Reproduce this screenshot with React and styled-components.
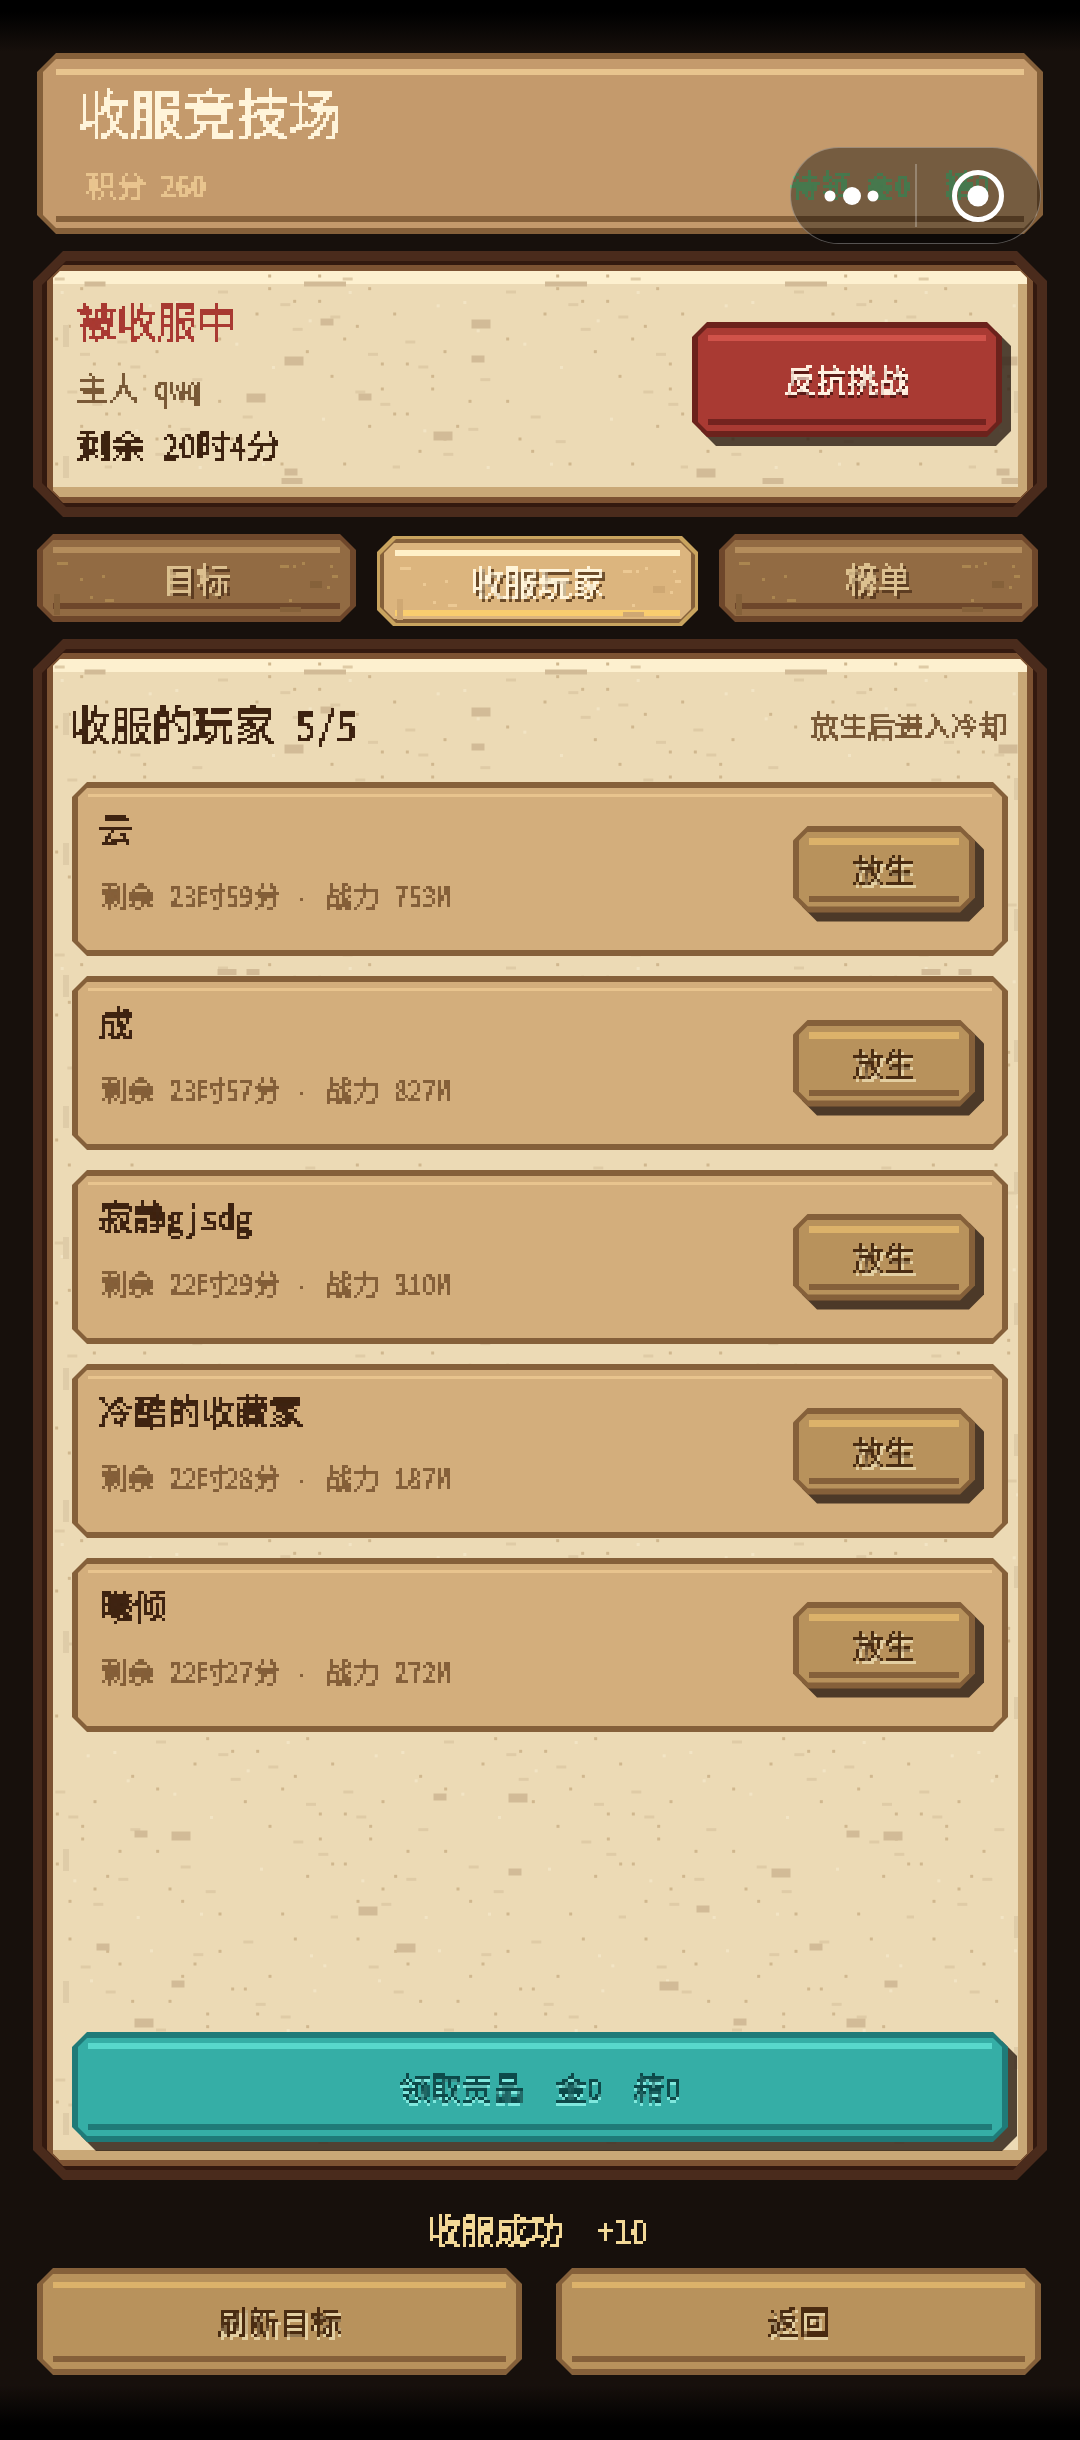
import React from 'react';
import styled, { createGlobalStyle, css } from 'styled-components';

const GlobalStyle = createGlobalStyle`
    html, body {
        margin: 0;
        padding: 0;
        background: #000;
    }
    * {
        box-sizing: border-box;
    }
    body {
        font-family: "Noto Sans CJK SC", sans-serif;
        font-feature-settings: "hwid";
    }
`

const octagon = cut => `clip-path: polygon(
    ${cut}px 0, calc(100% - ${cut}px) 0, 100% ${cut}px, 100% calc(100% - ${cut}px),
    calc(100% - ${cut}px) 100%, ${cut}px 100%, 0 calc(100% - ${cut}px), 0 ${cut}px
);`

// the game font is a bitmap one, this snaps real text to its grid
// the thin stroke keeps hairlines from falling between the grid points
const pixel = css`
    filter: url(#pixelText);
    -webkit-text-stroke: 0.3px currentColor;
`

// outer colour + inner face, the two strips are painted on the face
const bevel = css`
    position: relative;
    background: ${p => p.$edge};
    ${p => octagon(p.$cut ?? 16)}
    &::before {
        content: '';
        position: absolute;
        inset: ${p => p.$line ?? 6}px;
        ${p => octagon((p.$cut ?? 16) - 6)}
        background:
            linear-gradient(${p => p.$hi}, ${p => p.$hi}) ${p => p.$inset ?? 10}px ${p => p.$hiTop ?? 7}px / calc(100% - ${p => (p.$inset ?? 10) * 2}px) ${p => p.$hiH ?? 6}px no-repeat,
            linear-gradient(${p => p.$lo}, ${p => p.$lo}) ${p => p.$inset ?? 10}px calc(100% - ${p => p.$loBottom ?? 6}px) / calc(100% - ${p => (p.$inset ?? 10) * 2}px) 6px no-repeat,
            ${p => p.$fill};
    }
    > * {
        position: relative;
    }
`

const WOOD = { $edge: '#85603a', $fill: '#b8925c', $hi: '#dcb26a', $lo: '#85603a' };
const RED = { $edge: '#6b221c', $fill: '#a93a33', $hi: '#d0524a', $lo: '#74231f' };
const TEAL = { $edge: '#1f7a78', $fill: '#35aea6', $hi: '#58d8cc', $lo: '#1f7a78' };
const BOARD = { $edge: '#85603a', $fill: '#c49a6c', $hi: '#e8c48e', $lo: '#85603a' };
const CARD = { $edge: '#85603a', $fill: '#d3ae7c', $hi: '#e8c48e', $lo: 'transparent', $hiTop: 6, $hiH: 3 };
const TAB = { $edge: '#6e472b', $fill: '#926b43', $hi: '#b48d5c', $lo: '#6e472b', $hiTop: 7, $loBottom: 7 };
const TAB_ON = { $edge: '#85603a', $fill: '#dcb57e', $hi: '#fff0c8', $lo: '#f9cd6f', $line: 4, $hiTop: 7, $loBottom: 3, $hiH: 6 };

const Page = styled.div`
    position: relative;
    display: flex;
    flex-flow: column;
    width: 1080px;
    height: 2440px;
    padding: 53px 37px 0px 37px;
    overflow: hidden;
    background: linear-gradient(#000 0px, #000 12px, #17100c 52px, #17100c 2385px, #000 2425px);
`
const FilterDefs = styled.svg`
    position: absolute;
    width: 0px;
    height: 0px;
`
const Label = styled.span`
    ${pixel}
`

// ---- top board
const Board = styled.header`
    ${bevel}
    height: 181px;
    margin-bottom: 17px;
    padding: 26px 53px 0px 40px;
`
const Title = styled.h1`
    ${pixel}
    margin: 0px;
    font-size: 53px;
    font-weight: 400;
    line-height: 66px;
    color: #fff4da;
`
const BoardRow = styled.div`
    display: flex;
    justify-content: space-between;
    align-items: center;
    margin-top: 19px;
    padding-left: 9px;
    font-size: 30px;
    line-height: 40px;
`
const Score = styled.span`
    ${pixel}
    color: #e8c48e;
`
const Pending = styled.span`
    ${pixel}
    display: flex;
    gap: 35px;
    color: #76c880;
`

// ---- wechat capsule sits over the page
const Capsule = styled.div`
    position: absolute;
    top: 147px;
    right: 39px;
    display: flex;
    align-items: center;
    width: 251px;
    height: 97px;
    border: 1.5px solid rgba(255,255,255,0.3);
    border-radius: 49px;
    background-color: rgba(0,0,0,0.4);
`
const CapsuleHalf = styled.div`
    display: flex;
    justify-content: center;
    align-items: center;
    width: ${p => p.$width}px;
    height: 63px;
    ${p => p.$divided ? 'border-left: 2px solid rgba(255,255,255,0.25);' : null}
`

// ---- paper panels, four nested rings
const Panel = styled.section`
    margin: 0px -4px ${p => p.$after || 0}px -4px;
    height: ${p => p.$height}px;
    padding: 10px 10px 10px 9px;
    background: #4a2b1c;
    ${octagon(30)}
`
const PanelDark = styled.div`
    height: 100%;
    padding: 4px 4px 4px 5px;
    background: #33190f;
    ${octagon(24)}
`
const PanelBrown = styled.div`
    height: 100%;
    padding: 6px;
    background: #7c5232;
    ${octagon(16)}
`
const Paper = styled.div`
    position: relative;
    display: flex;
    flex-flow: ${p => p.$flow || 'row'};
    height: 100%;
    padding: ${p => p.$padding};
    border-right: 9px solid #c9a877;
    border-bottom: 10px solid #c9a877;
    background: #ecdab5;
    ${octagon(7)}
    &::before {
        content: '';
        position: absolute;
        top: 0px;
        left: 0px;
        right: -9px;
        height: 13px;
        background: #fdf0cf;
    }
    > * {
        position: relative;
    }
`
const Grain = styled.svg`
    position: absolute !important;
    top: 0px;
    left: 0px;
    width: 100%;
    height: 100%;
    pointer-events: none;
`

// ---- status panel
const StatusInfo = styled.div`
    flex: 1;
    display: flex;
    flex-flow: column;
    padding-top: 26px;
`
const StatusTitle = styled.div`
    ${pixel}
    font-size: 40px;
    line-height: 46px;
    color: #a93a33;
`
const StatusLine = styled.div`
    ${pixel}
    margin-top: ${p => p.$top}px;
    font-size: ${p => p.$size}px;
    line-height: 40px;
    color: ${p => p.color};
`
const Lifted = styled.div`
    flex: none;
    width: ${p => p.$width || 'auto'};
    height: ${p => p.$height}px;
    margin-top: ${p => p.$top || 0}px;
    filter: drop-shadow(9px 9px 0px rgba(42,27,19,0.8));
`
const Button = styled.button`
    ${bevel}
    display: flex;
    justify-content: center;
    align-items: center;
    gap: ${p => p.$gap || 0}px;
    width: 100%;
    height: 100%;
    padding: 0px 0px 1px 0px;
    border: none;
    font-family: inherit;
    font-feature-settings: inherit;
    font-size: 31px;
    line-height: 40px;
    color: ${p => p.$ink};
    text-shadow: ${p => p.$shade};
`

// ---- tabs
const Tabs = styled.nav`
    display: grid;
    grid-template-columns: 319px 321px 319px;
    column-gap: 21px;
    height: 92px;
    margin-bottom: 13px;
`
const TabFrame = styled.div`
    height: ${p => p.$active ? 90 : 88}px;
    margin-top: ${p => p.$active ? 2 : 0}px;
    ${p => p.$active ? `padding: 3px; background: #c9a45f; ${octagon(16)}` : null}
`
const Tab = styled.button`
    ${bevel}
    display: flex;
    justify-content: center;
    align-items: center;
    width: 100%;
    height: 100%;
    padding: 0px;
    border: none;
    font-family: inherit;
    font-feature-settings: inherit;
    font-size: ${p => p.$active ? 34 : 33}px;
    color: ${p => p.$active ? '#fff4da' : '#dcc090'};
    text-shadow: 3px 3px 0px ${p => p.$active ? '#6b4a28' : '#5d3d22'};
`

// ---- player list
const ListHead = styled.div`
    display: flex;
    justify-content: space-between;
    align-items: center;
    height: 46px;
    margin: 0px 1px 34px -2px;
`
const ListTitle = styled.h2`
    ${pixel}
    margin: -5px 0px 0px 0px;
    font-size: 41px;
    font-weight: 400;
    color: #3f2412;
`
const ListNote = styled.span`
    ${pixel}
    font-size: 28px;
    color: #7a5a38;
`
const Rows = styled.div`
    display: flex;
    flex-flow: column;
    gap: 20px;
`
const PlayerCard = styled.article`
    ${bevel}
    display: flex;
    justify-content: space-between;
    align-items: center;
    height: 174px;
    padding: 0px 33px 0px 27px;
`
const PlayerInfo = styled.div`
    display: flex;
    flex-flow: column;
    gap: 28px;
    margin-bottom: 13px;
`
const PlayerName = styled.div`
    ${pixel}
    font-size: 34px;
    line-height: 40px;
    color: #3f2412;
`
const PlayerMeta = styled.div`
    ${pixel}
    font-size: 28px;
    line-height: 36px;
    color: #85603a;
    white-space: pre;
`
const MetaDot = styled.span`
    display: inline-block;
    width: 43px;
    text-align: center;
    font-family: "Liberation Sans", sans-serif;
`
const ClaimWrap = styled.div`
    margin-top: auto;
    padding-bottom: 8px;
`

// ---- footer
const Message = styled.div`
    display: flex;
    justify-content: center;
    align-items: center;
    height: 88px;
    padding: 10px 5px 0px 0px;
    font-size: 34px;
    color: #f2d898;
    white-space: pre;
`
const Footer = styled.footer`
    display: grid;
    grid-template-columns: 485px 485px;
    column-gap: 34px;
    height: 107px;
`

// speckle tile, read off the reference at 3x, one tile is 288px
const DOTS = [[473,8],[773,8],[548,46],[623,46],[435,84],[848,84],[248,121],[736,121],[323,159],[698,159],[135,197],[586,197],[811,234],[22,234],[98,271],[660,271],[98,309],[811,309],[210,346],[323,346],[848,384],[22,384],[173,421],[773,421],[135,459],[360,459],[60,496],[398,496],[510,534],[698,534],[60,609],[736,609],[173,646],[510,646],[210,684],[435,684],[398,721],[660,721],[548,759],[586,759],[248,796],[360,796],[473,834],[623,834]];
const DASHES = [[333,18],[520,56],[670,93],[557,130],[31,168],[783,205],[70,243],[256,281],[745,318],[820,355],[407,393],[220,430],[482,467],[145,505],[857,543],[595,618],[445,656],[107,693],[182,768],[632,805],[707,843]];
const PALE = [[110,55],[370,170],[190,45],[480,240],[630,395],[70,430],[260,540],[450,530],[780,655],[820,685],[120,730],[790,760],[230,130],[590,100],[710,15],[300,640]];

// page coordinates: [x, y, w, h]
const TOP_BLOCKS = [[95,284,21,5],[325,284,42,5],[566,284,42,5],[806,284,42,5],[481,324,19,9],[327,322,13,7],[294,361,19,9],[478,359,13,7],[1008,361,19,9],[256,398,19,9],[365,397,13,7],[443,436,19,9],[291,472,13,7],[706,473,19,9],[1003,472,13,7],[292,481,21,6],[773,481,21,6],[1012,481,21,6]];
const LIST_BLOCKS = [[95,672,21,5],[325,672,42,5],[566,672,42,5],[806,672,42,5],[481,712,19,9],[327,710,13,7],[294,749,19,9],[478,747,13,7],[1008,749,19,9],[227,972,19,6],[253,972,13,6],[931,972,19,6],[965,972,13,6],[518,1798,19,9],[440,1797,13,7],[181,1836,19,9],[141,1834,13,7],[515,1872,13,7],[368,1911,19,9],[103,1947,13,7],[406,1948,19,9],[178,1984,13,7],[144,2023,19,9],[853,1834,13,7],[893,1836,19,9],[781,1873,19,9],[703,1909,13,7],[816,1947,13,7],[891,1984,13,7],[669,1986,19,9],[740,2022,13,7],[856,2023,19,9]];
const TOP_STRIPS = [[66,325],[66,456],[1017,391]];
const LIST_STRIPS = [[66,713],[66,843],[66,975],[66,1106],[66,1237],[66,1368],[66,1500],[66,1631],[66,1849],[66,1981],[66,2113],[1017,778],[1017,909],[1017,1040],[1017,1172],[1017,1303],[1017,1434],[1017,1566],[1017,1697],[1017,1916],[1017,2047]];

const TileCells = () =>
    <>
        {PALE.map(([x, y], i) => <rect key={'p' + i} x={x / 3} y={y / 3} width="3" height="3" fill="#f2e4c4" />)}
        {DASHES.map(([x, y], i) => <rect key={'h' + i} x={x / 3 - 5} y={y / 3 - 1.5} width="10" height="3" fill="#dfcba6" />)}
        {DOTS.map(([x, y], i) => <rect key={'d' + i} x={x / 3 - 1.5} y={y / 3 - 1.5} width="3" height="3" fill="#d0b78e" />)}
    </>

const PaperGrain = ({name, origin, blocks, strips, lower}) => {
    const [ox, oy] = origin;
    return (
        <Grain aria-hidden="true">
            <defs>
                <pattern id={name} x="59" y="15" width="288" height="288" patternUnits="userSpaceOnUse">
                    <TileCells />
                </pattern>
                {lower && (
                    <pattern id={name + 'Low'} x={lower.x} y={lower.y} width="288" height="288" patternUnits="userSpaceOnUse">
                        <TileCells />
                    </pattern>
                )}
            </defs>
            <rect width="100%" height={lower ? lower.from : '100%'} fill={`url(#${name})`} />
            {lower && <rect y={lower.from} width="100%" height="100%" fill={`url(#${name}Low)`} />}
            {blocks.map(([x, y, w, h], i) =>
                <rect key={i} x={x - ox - w / 2} y={y - oy - h / 2} width={w} height={h} fill="#d2bb97" />
            )}
            {strips.map(([x, y], i) =>
                <rect key={i} x={x - ox - 3} y={y - oy} width="6" height="22" fill="#dfcca8" />
            )}
        </Grain>
    );
}

const TAB_SPECKS = [[20,28,9,3],[28,28,3,3],[43,44,3,3],[65,41,3,3],[53,62,3,3],[68,65,9,3],[243,31,9,3],[256,31,3,3],[265,28,3,3],[293,31,3,3],[295,41,6,3],[290,52,3,3],[252,65,3,3],[273,47,12,7],[243,73,21,5],[17,60,6,21]];
const TabSpeck = styled.svg`
    position: absolute !important;
    top: 0px;
    left: 0px;
    width: 100%;
    height: 100%;
`
const TabGrain = ({active}) =>
    <TabSpeck aria-hidden="true">
        {TAB_SPECKS.map(([x, y, w, h], i) =>
            <rect key={i} x={x} y={y} width={w} height={h} fill={active ? (h > 3 ? '#cfa873' : '#ecc994') : (h > 3 ? '#85613a' : '#ab8650')} />
        )}
    </TabSpeck>

const TABS = ['目标', '收服玩家', '榜单'];
const PLAYERS = [
    { name: '云', left: '23时59分', power: '753M' },
    { name: '成', left: '23时57分', power: '827M' },
    { name: '寂静gjsdg', left: '22时29分', power: '310M' },
    { name: '冷酷的收藏家', left: '22时28分', power: '187M' },
    { name: '曦倾', left: '22时27分', power: '272M' },
];
const woodInk = { $ink: '#4a2c12', $shade: '2px 3px 0px #e3cfa2' };

const App = () =>
    <Page>
        <GlobalStyle />
        <FilterDefs aria-hidden="true">
            <filter id="pixelText" x="0" y="0" width="100%" height="100%" colorInterpolationFilters="sRGB">
                <feComponentTransfer in="SourceGraphic" result="hard">
                    <feFuncA type="discrete" tableValues="0 1 1 1" />
                </feComponentTransfer>
                <feFlood x="1" y="1" width="1" height="1" floodColor="#000" />
                <feComposite width="3" height="3" />
                <feTile result="grid" />
                <feComposite in="hard" in2="grid" operator="in" />
                <feMorphology operator="dilate" radius="1" />
            </filter>
        </FilterDefs>

        <Board {...BOARD} $cut={19} $hiTop={10} $loBottom={6} $inset={13}>
            <Title>收服竞技场</Title>
            <BoardRow>
                <Score>积分 260</Score>
                <Pending>
                    <span>待领 金0</span>
                    <span>精0</span>
                </Pending>
            </BoardRow>
        </Board>

        <Capsule>
            <CapsuleHalf $width={124}>
                <svg width="66" height="20" viewBox="1 0 66 20">
                    <circle cx="11" cy="10" r="5.5" fill="#fff" />
                    <circle cx="33" cy="10" r="9" fill="#fff" />
                    <circle cx="54" cy="10" r="5.5" fill="#fff" />
                </svg>
            </CapsuleHalf>
            <CapsuleHalf $width={124} $divided>
                <svg width="56" height="56" viewBox="0 0 56 56">
                    <circle cx="28" cy="28" r="23.5" fill="none" stroke="#fff" strokeWidth="5" />
                    <circle cx="28" cy="28" r="10.5" fill="#fff" />
                </svg>
            </CapsuleHalf>
        </Capsule>

        <Panel $height={266} $after={17}>
            <PanelDark>
                <PanelBrown>
                    <Paper $padding="0px 16px 0px 24px">
                        <PaperGrain name="topGrain" origin={[53, 271]} blocks={TOP_BLOCKS} strips={TOP_STRIPS} />
                        <StatusInfo>
                            <StatusTitle>被收服中</StatusTitle>
                            <StatusLine $top={24} $size={31} color="#7a5a38">主人 qwq</StatusLine>
                            <StatusLine $top={18} $size={34} color="#3f2412">剩余 20时4分</StatusLine>
                        </StatusInfo>
                        <Lifted $width="310px" $height={115} $top={51}>
                            <Button {...RED} $cut={15} $ink="#fff0e0" $shade="0px 3px 0px #5a1a16">
                                <Label>反抗挑战</Label>
                            </Button>
                        </Lifted>
                    </Paper>
                </PanelBrown>
            </PanelDark>
        </Panel>

        <Tabs>
            {TABS.map((label, i) =>
                <TabFrame key={label} $active={i === 1}>
                    <Tab {...(i === 1 ? TAB_ON : TAB)} $active={i === 1} $cut={16} $inset={i === 1 ? 11 : 10}>
                        <TabGrain active={i === 1} />
                        <Label>{label}</Label>
                    </Tab>
                </TabFrame>
            )}
        </Tabs>

        <Panel $height={1541}>
            <PanelDark>
                <PanelBrown>
                    <Paper $flow="column" $padding="43px 10px 0px 19px">
                        <PaperGrain
                            name="listGrain"
                            origin={[53, 659]}
                            blocks={LIST_BLOCKS}
                            strips={LIST_STRIPS}
                            lower={{ from: 1073, x: -3, y: 213 }}
                        />
                        <ListHead>
                            <ListTitle>收服的玩家 5/5</ListTitle>
                            <ListNote>放生后进入冷却</ListNote>
                        </ListHead>
                        <Rows>
                            {PLAYERS.map(player =>
                                <PlayerCard key={player.name} {...CARD} $cut={15}>
                                    <PlayerInfo>
                                        <PlayerName>{player.name}</PlayerName>
                                        <PlayerMeta>
                                            {`剩余 ${player.left}`}<MetaDot>·</MetaDot>{`战力 ${player.power}`}
                                        </PlayerMeta>
                                    </PlayerInfo>
                                    <Lifted $width="182px" $height={87}>
                                        <Button {...WOOD} $cut={15} $hiTop={6} $loBottom={5} $hiH={7} {...woodInk}>
                                            <Label>放生</Label>
                                        </Button>
                                    </Lifted>
                                </PlayerCard>
                            )}
                        </Rows>
                        <ClaimWrap>
                            <Lifted $height={110}>
                                <Button {...TEAL} $cut={15} $hiTop={5} $loBottom={6} $gap={32} $ink="#0e4a4a" $shade="0px 3px 0px #7fe8de">
                                    <Label>领取贡品</Label>
                                    <Label>金0</Label>
                                    <Label>精0</Label>
                                </Button>
                            </Lifted>
                        </ClaimWrap>
                    </Paper>
                </PanelBrown>
            </PanelDark>
        </Panel>

        <Message><Label>{'收服成功  +10'}</Label></Message>

        <Footer>
            <Button {...WOOD} {...woodInk} $cut={16} $hiTop={8} $loBottom={7}><Label>刷新目标</Label></Button>
            <Button {...WOOD} {...woodInk} $cut={16} $hiTop={8} $loBottom={7}><Label>返回</Label></Button>
        </Footer>
    </Page>

export default App;
